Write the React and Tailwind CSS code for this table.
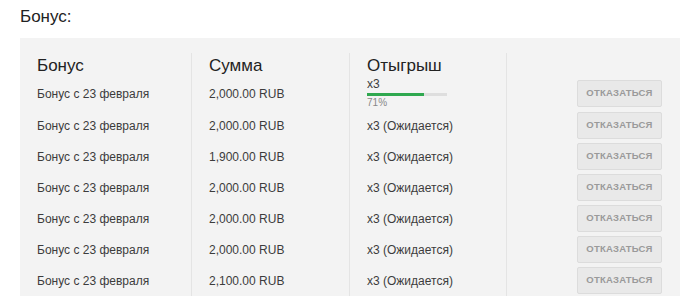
const ROWS = [
  { name: 'Бонус с 23 февраля', sum: '2,000.00 RUB', progress: 71 },
  { name: 'Бонус с 23 февраля', sum: '2,000.00 RUB' },
  { name: 'Бонус с 23 февраля', sum: '1,900.00 RUB' },
  { name: 'Бонус с 23 февраля', sum: '2,000.00 RUB' },
  { name: 'Бонус с 23 февраля', sum: '2,000.00 RUB' },
  { name: 'Бонус с 23 февраля', sum: '2,000.00 RUB' },
  { name: 'Бонус с 23 февраля', sum: '2,100.00 RUB' },
];

const cell = 'border-r border-[#e4e4e4] pl-[17px] flex items-center';

function Wager({ progress }) {
  if (progress == null) return <span>x3 (Ожидается)</span>;
  return (
    <div className="flex flex-col">
      <span className="text-[12px] leading-[13px]">x3</span>
      <div className="w-[80px] h-[3px] bg-[#dedede] mt-[2px]">
        <div className="h-full bg-[#2fa84f]" style={{ width: `${progress}%` }} />
      </div>
      <span className="text-[10px] leading-[14px] text-[#888]">{progress}%</span>
    </div>
  );
}

export default function App() {
  return (
    <div className="w-[700px] h-[296px] overflow-hidden bg-white text-[#3c3c3c] font-['Liberation_Sans',Arial,sans-serif]">
      <h2 className="pl-[20px] pt-[7px] text-[17px] leading-[20px] text-[#222]">Бонус:</h2>
      <div className="ml-[20px] mt-[11px] w-[660px] bg-[#f3f3f3] pt-[15px] pb-[10px]">
        <div className="grid grid-cols-[172px_158px_157px_173px] h-[24px] text-[17px] text-[#222]">
          <div className={cell + ' pb-[2px]'}>Бонус</div>
          <div className={cell + ' pb-[2px]'}>Сумма</div>
          <div className={cell + ' pb-[2px]'}>Отыгрыш</div>
          <div />
        </div>
        {ROWS.map((r, i) => (
          <div
            key={i}
            className={`grid grid-cols-[172px_158px_157px_173px] text-[12px] ${i === 0 ? 'h-[33px]' : 'h-[31px]'}`}
          >
            <div className={cell}>{r.name}</div>
            <div className={cell}>{r.sum}</div>
            <div className={cell}>
              <Wager progress={r.progress} />
            </div>
            <div className="flex items-center justify-end pr-[18px]">
              <button
                type="button"
                className="w-[85px] h-[27px] bg-[#e9e9e9] border border-[#dcdcdc] rounded-[2px] text-[9.5px] font-bold text-[#9a9a9a] tracking-[0.2px]"
              >
                ОТКАЗАТЬСЯ
              </button>
            </div>
          </div>
        ))}
      </div>
    </div>
  );
}
